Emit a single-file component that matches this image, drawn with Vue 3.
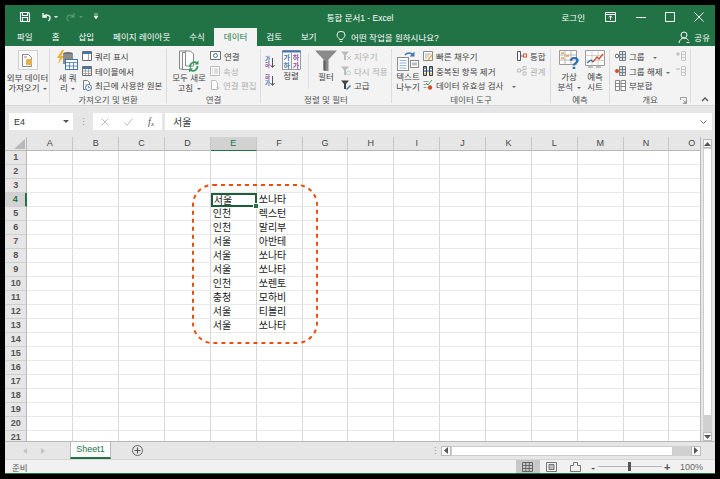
<template>
  <div class="screen">
    <div class="window">
      <header class="titlebar">
        <div class="qat">
          <svg class="qi" width="12" height="12" viewBox="0 0 12 12"><path d="M1.500 1.500h8l1 1v8h-9z M3.500 1.500v3h5v-3 M3.500 10.500v-4h5v4" fill="none" stroke="#fff" stroke-width="1.100"/></svg>
          <svg class="qi undo" width="12" height="12" viewBox="0 0 12 12"><path d="M3 2v4h4 M3.200 5.800C5 3.400 9 3.400 10 6c.5 1.500-.3 3-1.500 4" fill="none" stroke="#fff" stroke-width="1.300"/></svg>
          <i class="drop"></i>
          <svg class="qi redo" width="12" height="12" viewBox="0 0 12 12"><path d="M9 2v4H5 M8.800 5.800C7 3.400 3 3.400 2 6c-.5 1.500.3 3 1.500 4" fill="none" stroke="#5d9c7a" stroke-width="1.200"/></svg>
          <i class="drop dim"></i>
          <svg class="qi more" width="6" height="7" viewBox="0 0 6 7"><path d="M1 1h4M1 3l2 3 2-3z" fill="#fff" stroke="#e8f0eb" stroke-width=".7"/></svg>
        </div>
        <div class="doc">통합 문서1 - Excel</div>
        <div class="winctl">
          <span class="login">로그인</span>
          <svg class="wi" width="11" height="10" viewBox="0 0 11 10"><path d="M.5.500h10v9H.500z" fill="none" stroke="#fff"/><path d="M.5 2.500h10M5.500 8V4M3.800 5.500l1.700-1.700 1.700 1.700" fill="none" stroke="#fff"/></svg>
          <svg class="wi minbtn" width="10" height="10" viewBox="0 0 10 10"><path d="M0 5.500h10" stroke="#fff"/></svg>
          <svg class="wi maxbtn" width="10" height="10" viewBox="0 0 10 10"><path d="M.5.500h9v9h-9z" fill="none" stroke="#fff"/></svg>
          <svg class="wi closebtn" width="10" height="10" viewBox="0 0 10 10"><path d="M.5.500l9 9M9.500.500l-9 9" stroke="#fff"/></svg>
        </div>
      </header>

      <nav class="tabs">
        <span v-for="t in tabs" :key="t" class="tab" :class="{ active: t === '데이터' }">{{ t }}</span>
        <svg class="bulb" width="10" height="12" viewBox="0 0 10 12"><path d="M3.500 8.500C3 6.800 1 6.200 1 4a4 3.700 0 0 1 8 0c0 2.200-2 2.800-2.500 4.500zM3.800 10.500h2.400" fill="none" stroke="#fff" stroke-width=".9"/></svg>
        <span class="tell">어떤 작업을 원하시나요?</span>
        <div class="share">
          <svg width="12" height="12" viewBox="0 0 12 12"><circle cx="6" cy="4" r="3" fill="none" stroke="#fff"/><path d="M1 12c.5-3 2.500-5 5-5s3.500 1 4.500 2.500M8.500 11.500h3" fill="none" stroke="#fff"/></svg>
          <span>공유</span>
        </div>
      </nav>

      <section class="ribbon">
        <div class="group g1">
          <div class="gbody">
            <div class="bigbtn">
              <div class="ext-box">
                <svg width="11" height="13" viewBox="0 0 11 13"><path d="M.5.500h6l3 3v9h-9z" fill="#fff" stroke="#8a8a8a"/><rect x="4" y="5" width="6" height="6" rx="1" fill="#e3b04b"/><path d="M2 3h3" stroke="#8a8a8a"/></svg>
              </div>
              <div class="biglabel">외부 데이터<br />가져오기 <i class="caret"></i></div>
            </div>
          </div>
          <div class="glabel">&nbsp;</div>
        </div>

        <div class="group g2">
          <div class="gbody">
            <div class="bigbtn newq">
              <svg class="bigicon" width="21" height="22" viewBox="0 0 21 22">
                <path d="M5 0L0 8h3l-2 6 6-8H4l3-6z" fill="#eeb028"/>
                <ellipse cx="11" cy="4" rx="5" ry="2" fill="#6d6d6d"/>
                <path d="M6 4v10h10V4" fill="#8c8c8c"/>
                <rect x="8.500" y="9.500" width="12" height="10" fill="#fff" stroke="#3f75b1"/>
                <path d="M8.500 12.500h12M12.500 12.500v7M16.500 12.500v7M8.500 16h12" stroke="#3f75b1" stroke-width=".8"/>
              </svg>
              <div class="biglabel">새 쿼<br />리 <i class="caret"></i></div>
            </div>
            <div class="rows">
              <div class="row">
                <svg class="si" width="10" height="10" viewBox="0 0 10 10"><path d="M.5.500h9v9h-9z" fill="#fff" stroke="#6c6c6c"/><path d="M.5 2h9" stroke="#3f75b1" stroke-width="2"/><path d="M6.500 3v6" stroke="#aaa"/></svg>
                <span>쿼리 표시</span>
              </div>
              <div class="row">
                <svg class="si" width="10" height="10" viewBox="0 0 10 10"><path d="M.5.500h9v9h-9z" fill="#fff" stroke="#6c6c6c"/><path d="M.5 2h9" stroke="#3f75b1" stroke-width="2"/><path d="M.5 5h9M.5 7.500h9M3.500 3v6M6.500 3v6" stroke="#888" stroke-width=".7"/></svg>
                <span>테이블에서</span>
              </div>
              <div class="row">
                <svg class="si" width="10" height="11" viewBox="0 0 10 11"><path d="M1.500.500h4l2 2v3M1.500.500v9h2" fill="#fff" stroke="#7a7a7a"/><circle cx="6.500" cy="7.500" r="3" fill="#fff" stroke="#3f75b1"/><path d="M6.500 6v1.500h1.500" stroke="#3f75b1" fill="none" stroke-width=".8"/></svg>
                <span>최근에 사용한 원본</span>
              </div>
            </div>
          </div>
          <div class="glabel">가져오기 및 변환</div>
        </div>

        <div class="group g3">
          <div class="gbody">
            <div class="bigbtn refresh">
              <svg class="bigicon" width="20" height="22" viewBox="0 0 20 22">
                <path d="M.5 1h7l3 3v15h-10z" fill="#f7f7f7" stroke="#8a8a8a"/>
                <path d="M3.500 2.500h5l3 2.500v14.500h-8z" fill="#fff" stroke="#8a8a8a"/>
                <path d="M6.500 1h5l3 3v12h-8z" fill="#fff" stroke="#8a8a8a"/>
                <path d="M11 17a4.500 4.500 0 0 1 7-4M18.500 16a4.500 4.500 0 0 1-7 4" fill="none" stroke="#35995a" stroke-width="1.800"/>
                <path d="M19.500 10.500v4h-4zM10 22.500v-4h4z" fill="#35995a"/>
              </svg>
              <div class="biglabel">모두 새로<br />고침 <i class="caret"></i></div>
            </div>
            <div class="rows">
              <div class="row">
                <svg class="si" width="11" height="10" viewBox="0 0 11 10"><path d="M.5.500h10v8h-10z" fill="#fff" stroke="#6c6c6c"/><circle cx="5.500" cy="4.500" r="2" fill="none" stroke="#3f75b1"/></svg>
                <span>연결</span>
              </div>
              <div class="row off">
                <svg class="si" width="10" height="10" viewBox="0 0 10 10"><path d="M.5.500h9v9h-9z" fill="#fff" stroke="#bcbcbc"/><path d="M2 3h1M4 3h4M2 5h1M4 5h4M2 7h1M4 7h4" stroke="#bcbcbc"/></svg>
                <span>속성</span>
              </div>
              <div class="row off">
                <svg class="si" width="10" height="10" viewBox="0 0 10 10"><path d="M1.500.500h4l2 2v7h-6z" fill="#fff" stroke="#bcbcbc"/><path d="M6 8l3 1-1-3z" fill="#bcbcbc"/></svg>
                <span>연결 편집</span>
              </div>
            </div>
          </div>
          <div class="glabel">연결</div>
        </div>

        <div class="group g4">
          <div class="gbody">
            <div class="sorts">
              <div class="sort">
                <div class="letters"><span class="blue">가</span><span class="purple">하</span></div>
                <svg width="5" height="10" viewBox="0 0 5 10"><path d="M2.500 0v9M.5 7l2 2.500 2-2.500" fill="none" stroke="#555"/></svg>
              </div>
              <div class="sort">
                <div class="letters"><span class="purple">하</span><span class="blue">가</span></div>
                <svg width="5" height="10" viewBox="0 0 5 10"><path d="M2.500 0v9M.5 7l2 2.500 2-2.500" fill="none" stroke="#555"/></svg>
              </div>
            </div>
            <div class="bigbtn sortbig">
              <svg class="bigicon" width="19" height="20" viewBox="0 0 19 20">
                <path d="M.5.500h18v19H.5z" fill="#fff" stroke="#9a9a9a"/>
                <path d="M.5 1.500h18" stroke="#3f75b1" stroke-width="2"/>
                <path d="M9.500 2v17" stroke="#9a9a9a"/>
                <text x="1.500" y="10" font-size="7" font-weight="700" fill="#3f75b1">가</text>
                <text x="1.500" y="17.500" font-size="7" font-weight="700" fill="#3f75b1">하</text>
                <text x="10.800" y="10" font-size="7" font-weight="700" fill="#8e4aa0">하</text>
                <text x="10.800" y="17.500" font-size="7" font-weight="700" fill="#8e4aa0">가</text>
              </svg>
              <div class="biglabel">정렬</div>
            </div>
            <div class="vsep"></div>
            <div class="bigbtn filter">
              <svg class="bigicon" width="22" height="21" viewBox="0 0 22 21"><path d="M0 .5h22l-8.500 9V21h-5V9.500z" fill="#8a8a8a"/><path d="M9.500 10.500V20" stroke="#5d5d5d" stroke-width="2"/></svg>
              <div class="biglabel">필터</div>
            </div>
            <div class="rows">
              <div class="row off">
                <svg class="si" width="10" height="10" viewBox="0 0 10 10"><path d="M0 .5h8L5 4v5H3V4z" fill="#bcbcbc"/><path d="M6 5l4 4M10 5L6 9" stroke="#c6c6c6"/></svg>
                <span>지우기</span>
              </div>
              <div class="row off">
                <svg class="si" width="10" height="10" viewBox="0 0 10 10"><path d="M0 .5h8L5 4v5H3V4z" fill="#bcbcbc"/><circle cx="7.500" cy="7" r="2" fill="none" stroke="#bcd3c3"/></svg>
                <span>다시 적용</span>
              </div>
              <div class="row">
                <svg class="si" width="10" height="10" viewBox="0 0 10 10"><path d="M0 .5h8L5 4v5H3V4z" fill="#444"/><path d="M5.500 9.500l4-4" stroke="#3f75b1" stroke-width="1.500"/></svg>
                <span>고급</span>
              </div>
            </div>
          </div>
          <div class="glabel">정렬 및 필터</div>
        </div>

        <div class="group g5">
          <div class="gbody">
            <div class="bigbtn split">
              <svg class="bigicon" width="22" height="21" viewBox="0 0 22 21">
                <path d="M8 5a5 5 0 0 1 8 0" fill="none" stroke="#3f75b1" stroke-width="1.400"/>
                <path d="M17.500 1.500v5h-5z" fill="#3f75b1"/>
                <rect x=".5" y="7.500" width="11" height="13" fill="#fff" stroke="#8a8a8a"/>
                <path d="M2.500 10.500h7M2.500 13h7M2.500 15.500h7M2.500 18h7" stroke="#8fb2d6"/>
                <rect x="13.500" y="10.500" width="8" height="7" fill="#fff" stroke="#8a8a8a"/>
                <rect x="15" y="12.500" width="5" height="3" fill="#bcbcbc"/>
              </svg>
              <div class="biglabel">텍스트<br />나누기</div>
            </div>
            <div class="rows wide">
              <div class="row">
                <svg class="si" width="10" height="10" viewBox="0 0 10 10"><path d="M.5.500h9v9h-9z" fill="#fff" stroke="#8a8a8a"/><path d="M2 3h6M2 5h4M2 7h2" stroke="#aaa"/><path d="M5 9l4-5" stroke="#e3b04b" stroke-width="1.500"/></svg>
                <span>빠른 채우기</span>
              </div>
              <div class="row">
                <svg class="si" width="10" height="10" viewBox="0 0 10 10"><path d="M.5.5h3v9h-3zM6.500.500h3v9h-3z" fill="#fff" stroke="#3b3b3b"/><path d="M1 2h2M1 5h2M7 2h2M7 5h2" stroke="#3f75b1" stroke-width="1.500"/><path d="M1 8h2M7 8h2" stroke="#e3b04b" stroke-width="1.500"/><path d="M4 5h2" stroke="#3f75b1"/></svg>
                <span>중복된 항목 제거</span>
              </div>
              <div class="row">
                <svg class="si" width="10" height="10" viewBox="0 0 10 10"><path d="M.5 1.500h5M.5 4.500h3M.5 7.500h3" stroke="#9a9a9a"/><path d="M3 3l2 2 4-5" fill="none" stroke="#46a05f"/><circle cx="7" cy="7.500" r="2.200" fill="#d4502a"/></svg>
                <span>데이터 유효성 검사 <i class="caret wide-caret"></i></span>
              </div>
            </div>
            <div class="rows narrow">
              <div class="row">
                <svg class="si" width="10" height="10" viewBox="0 0 10 10"><path d="M.5.500h3v9h-3z" fill="#fff" stroke="#555"/><path d="M4 5h2" stroke="#3f75b1"/><rect x="6.500" y="3" width="3" height="3" fill="#fff" stroke="#d4502a"/></svg>
                <span>통합</span>
              </div>
              <div class="row off">
                <svg class="si" width="10" height="10" viewBox="0 0 10 10"><path d="M.5 3h3v3h-3zM6 .5h3v3H6zM6 6h3v3H6zM3.500 4.500H6" fill="none" stroke="#bcbcbc"/></svg>
                <span>관계</span>
              </div>
            </div>
          </div>
          <div class="glabel">데이터 도구</div>
        </div>

        <div class="group g6">
          <div class="gbody">
            <div class="bigbtn whatif">
              <svg class="bigicon" width="20" height="21" viewBox="0 0 20 21">
                <path d="M.5.500h17v14h-17z" fill="#fff" stroke="#9a9a9a"/>
                <path d="M6 .5v14M12 .5v14M.5 5h17M.5 10h17" stroke="#b5b5b5"/>
                <path d="M2 3h3M2 8h3M7 6h3" stroke="#e3a03b" stroke-width="1.500"/>
                <text x="10" y="19" font-size="17" font-weight="700" fill="#2a6db0">?</text>
              </svg>
              <div class="biglabel">가상<br />분석 <i class="caret"></i></div>
            </div>
            <div class="bigbtn forecast">
              <svg class="bigicon" width="20" height="21" viewBox="0 0 20 21">
                <path d="M.5.500h19v15h-19z" fill="#fff" stroke="#9a9a9a"/>
                <path d="M7 .5v15M13 .5v15M.5 5.500h19M.5 10.500h19" stroke="#cfcfcf"/>
                <path d="M2 13l4-3 2 2" fill="none" stroke="#2a6db0" stroke-width="1.300"/>
                <path d="M8 12l4-5 2 2 4-5" fill="none" stroke="#d4502a" stroke-width="1.300"/>
                <path d="M3 17h5M11 17h5" stroke="#8a8a8a"/>
              </svg>
              <div class="biglabel">예측<br />시트</div>
            </div>
          </div>
          <div class="glabel">예측</div>
        </div>

        <div class="group g7">
          <div class="gbody">
            <div class="rows">
              <div class="row">
                <svg class="si" width="11" height="10" viewBox="0 0 11 10"><circle cx="2" cy="5" r="1.800" fill="#fff" stroke="#666"/><path d="M4.500.500h6v9h-6zM4.500 3.500h6M4.500 6.500h6M7.500.5v9" fill="#cfe0ef" stroke="#6c6c6c" stroke-width=".8"/></svg>
                <span>그룹 <i class="caret wide-caret"></i></span>
              </div>
              <div class="row">
                <svg class="si" width="11" height="10" viewBox="0 0 11 10"><circle cx="2" cy="5" r="2" fill="#d4502a"/><path d="M4.500.500h6v9h-6zM4.500 3.500h6M4.500 6.500h6M7.500.5v9" fill="#cfe0ef" stroke="#6c6c6c" stroke-width=".8"/></svg>
                <span>그룹 해제 <i class="caret"></i></span>
              </div>
              <div class="row">
                <svg class="si" width="11" height="11" viewBox="0 0 11 11"><path d="M.5.500h4v10h-4zM6 .5h4.500v10H6zM6 3.500h4.500M6 6.500h4.500M.5 3.500h4M.5 6.500h4" fill="#fff" stroke="#6c6c6c" stroke-width=".8"/></svg>
                <span>부분합</span>
              </div>
            </div>
            <div class="outline">
              <svg width="10" height="10" viewBox="0 0 10 10"><path d="M0 3h4M2 1v4" stroke="#b5b5b5"/><path d="M5.500.5h4v9h-4zM5.500 3.500h4M5.500 6.500h4" fill="none" stroke="#c6c6c6"/></svg>
              <svg width="10" height="10" viewBox="0 0 10 10"><path d="M0 3h4" stroke="#b5b5b5"/><path d="M5.500.5h4v9h-4zM5.500 3.500h4M5.500 6.500h4" fill="none" stroke="#c6c6c6"/></svg>
            </div>
          </div>
          <div class="glabel">개요</div>
          <svg class="launcher" width="7" height="7" viewBox="0 0 7 7"><path d="M.5 3V.5h6v6H3M3 3l3 3M6 3.500V6H3.500" fill="none" stroke="#8a8a8a" stroke-width=".8"/></svg>
        </div>
        <svg class="collapse" width="8" height="5" viewBox="0 0 8 5"><path d="M1 4l3-3 3 3" fill="none" stroke="#555" stroke-width="1.300"/></svg>
      </section>

      <section class="formula">
        <div class="namebox">
          <span>E4</span>
          <i class="caret dark"></i>
        </div>
        <div class="grip">⋮</div>
        <div class="fx-btns">
          <svg width="8" height="8" viewBox="0 0 8 8"><path d="M.5.500l7 7M7.500.500l-7 7" stroke="#bdbdbd"/></svg>
          <svg width="9" height="8" viewBox="0 0 9 8"><path d="M.5 4.500l2.500 3 5.500-7" fill="none" stroke="#bdbdbd"/></svg>
          <span class="fx">f<sub>x</sub></span>
        </div>
        <div class="finput">
          <span>서울</span>
          <svg width="7" height="4" viewBox="0 0 7 4"><path d="M.5.500l3 3 3-3" fill="none" stroke="#666"/></svg>
        </div>
      </section>

      <section class="sheet">
        <div class="gridwrap">
          <div class="colheads">
            <div class="corner"><svg width="11" height="10" viewBox="0 0 11 10"><path d="M11 0v10H0z" fill="#b9b9b9"/></svg></div>
            <div v-for="c in cols" :key="c" class="colhead" :class="{ on: c === 'E' }">{{ c }}</div>
          </div>
          <div class="rowlist">
            <div v-for="r in rows" :key="r.n" class="gridrow">
              <div class="rowhead" :class="{ on: r.n === 4 }">{{ r.n }}</div>
              <div v-for="c in cols" :key="c" class="cell" :class="{ sel: c === 'E' && r.n === 4 }">
                {{ cellText(r, c) }}
                <i v-if="c === 'E' && r.n === 4" class="handle"></i>
              </div>
            </div>
          </div>
          <svg class="note" width="126" height="160" viewBox="0 0 126 160">
            <rect x="1" y="1" width="124" height="158" rx="20" fill="none" stroke="#e8500f" stroke-width="2" stroke-dasharray="4 4" />
          </svg>
        </div>
        <div class="vscroll">
          <div class="sbtn"><svg width="7" height="4" viewBox="0 0 7 4"><path d="M0 4l3.500-4L7 4z" fill="#555"/></svg></div>
          <div class="vtrack"><div class="vthumb"></div></div>
          <div class="sbtn"><svg width="7" height="4" viewBox="0 0 7 4"><path d="M0 0l3.500 4L7 0z" fill="#555"/></svg></div>
        </div>
      </section>

      <section class="sheettabs">
        <div class="navs">
          <svg width="4" height="6" viewBox="0 0 4 6"><path d="M4 0v6L0 3z" fill="#c2c2c2"/></svg>
          <svg width="4" height="6" viewBox="0 0 4 6"><path d="M0 0v6l4-3z" fill="#c2c2c2"/></svg>
        </div>
        <div class="stab">Sheet1</div>
        <svg class="addsheet" width="11" height="11" viewBox="0 0 11 11"><circle cx="5.500" cy="5.500" r="5" fill="none" stroke="#666"/><path d="M2.500 5.500h6M5.500 2.500v6" stroke="#555" stroke-width="1.100"/></svg>
        <div class="grip tabgrip">⋮</div>
        <div class="hscroll">
          <div class="sbtn"><svg width="4" height="7" viewBox="0 0 4 7"><path d="M4 0v7L0 3.500z" fill="#555"/></svg></div>
          <div class="hthumb"></div>
          <div class="htrack"></div>
          <div class="sbtn"><svg width="4" height="7" viewBox="0 0 4 7"><path d="M0 0v7l4-3.500z" fill="#555"/></svg></div>
        </div>
      </section>

      <footer class="status">
        <span class="ready">준비</span>
        <div class="views">
          <div class="view on"><svg width="11" height="10" viewBox="0 0 11 10"><path d="M.5.500h10v9H.5zM.5 3.500h10M.5 6.500h10M3.800.5v9M7.200.5v9" fill="none" stroke="#666"/></svg></div>
          <div class="view"><svg width="11" height="10" viewBox="0 0 11 10"><path d="M.5.500h10v9H.5z" fill="none" stroke="#777"/><path d="M3 2.500h5v5H3z" fill="#bbb" stroke="#777"/></svg></div>
          <div class="view"><svg width="11" height="10" viewBox="0 0 11 10"><path d="M.5 3.500h3v-3h4v3h3v6H.5z" fill="none" stroke="#777"/></svg></div>
        </div>
        <div class="zoom">
          <span class="pm">-</span>
          <div class="slider"><i></i></div>
          <span class="pm">+</span>
        </div>
        <span class="pct">100%</span>
      </footer>
    </div>
  </div>
</template>

<script setup>
const tabs = ["파일", "홈", "삽입", "페이지 레이아웃", "수식", "데이터", "검토", "보기"];
const cols = "ABCDEFGHIJKLMNO".split("");

const data = {
  4: ["서울", "쏘나타"],
  5: ["인천", "렉스턴"],
  6: ["인천", "말리부"],
  7: ["서울", "아반테"],
  8: ["서울", "쏘나타"],
  9: ["서울", "쏘나타"],
  10: ["인천", "쏘렌토"],
  11: ["충청", "모하비"],
  12: ["서울", "티볼리"],
  13: ["서울", "쏘나타"],
};

const rows = Array.from({ length: 21 }, (_, i) => ({ n: i + 1, vals: data[i + 1] || [] }));

const cellText = (r, c) => {
  if (c === "E") return r.vals[0] || "";
  if (c === "F") return r.vals[1] || "";
  return "";
};
</script>

<style>
html,
body {
  margin: 0;
  background: #000;
}
</style>

<style scoped>
.screen {
  width: 720px;
  height: 479px;
  box-sizing: border-box;
  padding: 5px;
  background: #000;
  overflow: hidden;
  font-family: "Liberation Sans", "Noto Sans CJK KR", sans-serif;
  font-size: 8.5px;
  color: #444;
}

.window {
  width: 710px;
  height: 469px;
  display: flex;
  flex-direction: column;
  background: #e6e6e6;
  border-bottom: 1px solid #217346;
  box-sizing: border-box;
  overflow: hidden;
}

i {
  font-style: normal;
}

/* title */
.titlebar {
  height: 23px;
  flex: none;
  display: grid;
  grid-template-columns: 1fr auto 1fr;
  align-items: center;
  background: #217346;
  color: #fff;
}

.qat {
  display: flex;
  align-items: center;
  padding-left: 14px;
}

.qi.undo {
  margin-left: 9px;
}

.qi.redo {
  margin-left: 7px;
}

.qi.more {
  margin-left: 10px;
}

.drop {
  width: 0;
  height: 0;
  margin-left: 2px;
  border: 2px solid transparent;
  border-top-color: #fff;
  border-bottom: 0;
}

.drop.dim {
  border-top-color: #5d9c7a;
}

.doc {
  white-space: nowrap;
}

.winctl {
  display: flex;
  align-items: center;
  justify-content: flex-end;
}

.login {
  margin-right: 20px;
}

.minbtn {
  margin-left: 20px;
}

.maxbtn {
  margin-left: 19px;
}

.closebtn {
  margin-left: 19px;
  margin-right: 11px;
}

/* tabs */
.tabs {
  height: 18px;
  flex: none;
  display: flex;
  align-items: center;
  padding-left: 2.5px;
  background: #217346;
  color: #fff;
}

.tab {
  height: 18px;
  line-height: 18px;
  padding: 0 9.5px;
  white-space: nowrap;
}

.tab.active {
  background: #f3f3f3;
  color: #217346;
}

.bulb {
  margin-left: 10px;
}

.tell {
  margin-left: 5px;
}

.share {
  margin-left: auto;
  margin-right: 5px;
  display: flex;
  align-items: center;
  gap: 4px;
}

/* ribbon */
.ribbon {
  position: relative;
  height: 60px;
  flex: none;
  display: flex;
  padding-top: 3px;
  box-sizing: border-box;
  background: #f3f3f3;
  border-bottom: 1px solid #d6d6d6;
}

.group {
  position: relative;
  height: 54px;
  box-sizing: border-box;
  display: flex;
  flex-direction: column;
  border-right: 1px solid #dcdcdc;
}

.g1 { width: 45px; }
.g2 { width: 117px; }
.g3 { width: 94px; }
.g4 { width: 131px; }
.g5 { width: 159px; }
.g6 { width: 59px; }
.g7 { width: 81px; }

.gbody {
  flex: 1;
  display: flex;
  min-height: 0;
}

.glabel {
  height: 12px;
  margin-bottom: -3px;
  line-height: 12px;
  text-align: center;
  color: #555;
}

.bigbtn {
  flex: none;
  display: flex;
  flex-direction: column;
  align-items: center;
}

.biglabel {
  margin-top: 1px;
  line-height: 10px;
  text-align: center;
  white-space: nowrap;
}

.bigicon {
  margin-top: 1px;
}

.g1 .bigbtn {
  width: 45px;
}

.ext-box {
  width: 20px;
  height: 20px;
  box-sizing: border-box;
  margin-top: 1px;
  display: flex;
  align-items: center;
  justify-content: center;
  border: 1px solid #d0d0d0;
  background: #f8f8f8;
}

.g1 .biglabel {
  margin-top: 3px;
}

.newq {
  width: 25px;
  margin-left: 5px;
}

.g2 .rows {
  margin-left: 2px;
}

.refresh {
  width: 36px;
  margin-left: 4px;
}

.sorts {
  width: 14px;
  margin-left: 4px;
  display: flex;
  flex-direction: column;
  gap: 7px;
  padding-top: 8px;
  flex: none;
}

.sort {
  height: 11px;
  display: flex;
  align-items: center;
  gap: 0;
}

.letters {
  display: flex;
  flex-direction: column;
  font-size: 5.5px;
  line-height: 5.5px;
  font-weight: 700;
}

.blue {
  color: #3f75b1;
}

.purple {
  color: #8e4aa0;
}

.sortbig {
  width: 24px;
}

.vsep {
  width: 1px;
  height: 36px;
  flex: none;
  margin: 4px 5px 0 5px;
  background: #e0e0e0;
}

.filter {
  width: 24px;
}

.split {
  width: 24px;
  margin-left: 4px;
}

.whatif {
  width: 24px;
  margin-left: 6px;
}

.forecast {
  width: 24px;
  margin-left: 2px;
}

.rows {
  display: flex;
  flex-direction: column;
  margin-left: 3px;
}

.row {
  height: 14.5px;
  display: flex;
  align-items: center;
  gap: 3px;
  white-space: nowrap;
}

.row.off {
  color: #b1b1b1;
}

.si {
  flex: none;
}

.rows.wide {
  width: 94px;
}

.rows.narrow {
  margin-left: 0;
}

.outline {
  margin-left: 6px;
  padding-top: 2px;
  display: flex;
  flex-direction: column;
  gap: 5px;
}

.g7 .rows {
  margin-left: 5px;
}

.launcher {
  position: absolute;
  right: 3px;
  bottom: -1px;
}

.collapse {
  position: absolute;
  right: 6px;
  bottom: 3px;
}

.caret {
  display: inline-block;
  width: 0;
  height: 0;
  margin-left: 1px;
  vertical-align: middle;
  border: 2px solid transparent;
  border-top-color: #666;
  border-bottom: 0;
}

.caret.wide-caret {
  margin-left: 6px;
}

/* formula bar */
.formula {
  height: 31px;
  flex: none;
  display: flex;
  align-items: center;
  padding: 0 3px 0 4px;
  box-sizing: border-box;
  background: #e6e6e6;
}

.namebox {
  width: 64px;
  height: 17px;
  flex: none;
  box-sizing: border-box;
  display: flex;
  align-items: center;
  justify-content: space-between;
  padding: 0 4px 0 5px;
  background: #fff;
  font-size: 9px;
  color: #333;
}

.caret.dark {
  border-width: 3px;
  border-bottom: 0;
  border-top-color: #555;
}

.grip {
  width: 20px;
  flex: none;
  text-align: center;
  color: #999;
  font-size: 9px;
}

.fx-btns {
  width: 69px;
  height: 17px;
  flex: none;
  box-sizing: border-box;
  display: flex;
  align-items: center;
  justify-content: space-between;
  padding: 0 8px;
  background: #fff;
}

.fx {
  font-family: "Liberation Serif", serif;
  font-style: italic;
  font-size: 10px;
  color: #555;
}

.fx sub {
  font-size: 7px;
  vertical-align: -1px;
  line-height: 0;
}

.finput {
  flex: 1;
  height: 17px;
  margin-left: 3px;
  display: flex;
  align-items: center;
  justify-content: space-between;
  padding: 0 5px 0 8px;
  background: #fff;
  font-size: 10px;
  color: #333;
}

/* grid */
.sheet {
  height: 304px;
  flex: none;
  display: flex;
  background: #e6e6e6;
}

.gridwrap {
  position: relative;
  width: 696px;
  flex: none;
  overflow: hidden;
  background: #fff;
  box-sizing: border-box;
  border-right: 1px solid #b9b9b9;
}

.colheads {
  height: 14px;
  display: flex;
}

.corner {
  width: 22.4px;
  flex: none;
  box-sizing: border-box;
  display: flex;
  align-items: flex-end;
  justify-content: flex-end;
  padding: 0 1px 1px 0;
  background: #e6e6e6;
  border-right: 1px solid #b9b9b9;
  border-bottom: 1px solid #b9b9b9;
}

.colhead {
  width: 45.87px;
  flex: none;
  box-sizing: border-box;
  text-align: center;
  line-height: 13px;
  font-size: 9px;
  color: #444;
  background: #e6e6e6;
  border-right: 1px solid #c6c6c6;
  border-bottom: 1px solid #b9b9b9;
}

.colhead.on {
  background: #d2d2d2;
  color: #217346;
  border-bottom: 1px solid #217346;
}

.gridrow {
  height: 14px;
  display: flex;
}

.rowhead {
  width: 22.4px;
  flex: none;
  box-sizing: border-box;
  text-align: center;
  line-height: 13px;
  font-size: 9px;
  font-weight: 700;
  color: #555;
  background: #e6e6e6;
  border-right: 1px solid #b9b9b9;
  border-bottom: 1px solid #cfcfcf;
}

.rowhead.on {
  background: #d2d2d2;
  color: #217346;
  border-right: 2px solid #217346;
}

.cell {
  position: relative;
  width: 45.87px;
  flex: none;
  box-sizing: border-box;
  padding-left: 2px;
  line-height: 14px;
  font-size: 10px;
  color: #1a1a1a;
  white-space: nowrap;
  border-right: 1px solid #d8d8d8;
  border-bottom: 1px solid #e8e8e8;
}

.cell.sel {
  border: 2px solid #1f5d3a;
  padding-left: 1px;
  line-height: 11px;
}

.handle {
  position: absolute;
  right: -4px;
  bottom: -4px;
  width: 4px;
  height: 4px;
  background: #217346;
  border: 1px solid #fff;
  z-index: 1;
}

.note {
  position: absolute;
  left: 187px;
  top: 47px;
  pointer-events: none;
}

.vscroll {
  flex: 1;
  display: flex;
  flex-direction: column;
  padding: 2px 3px 0 2px;
}

.sbtn {
  height: 9px;
  display: flex;
  align-items: center;
  justify-content: center;
  background: #f8f8f8;
  border: 1px solid #bdbdbd;
  box-sizing: border-box;
  flex: none;
}

.vtrack {
  flex: 1;
  background: #d0d0d0;
}

.vthumb {
  height: 268px;
  box-sizing: border-box;
  background: #fff;
  border: 1px solid #cdcdcd;
}

/* sheet tabs */
.sheettabs {
  height: 18px;
  flex: none;
  display: flex;
  align-items: center;
  background: #e6e6e6;
  border-top: 1px solid #b9b9b9;
  box-sizing: border-box;
}

.navs {
  width: 65px;
  flex: none;
  display: flex;
  gap: 14px;
  padding-left: 18px;
  box-sizing: border-box;
}

.stab {
  width: 41px;
  height: 17px;
  flex: none;
  box-sizing: border-box;
  margin-top: -1px;
  text-align: center;
  line-height: 15px;
  font-size: 9px;
  color: #217346;
  background: #fff;
  border-left: 1px solid #b9b9b9;
  border-right: 1px solid #b9b9b9;
  border-bottom: 2px solid #217346;
}

.addsheet {
  margin-left: 21px;
}

.tabgrip {
  margin-left: auto;
  width: 10px;
}

.hscroll {
  width: 260px;
  height: 10px;
  margin-left: 1px;
  margin-right: 14px;
  flex: none;
  display: flex;
  align-items: center;
}

.hscroll .sbtn {
  width: 10px;
  height: 10px;
}

.hthumb {
  width: 222px;
  height: 10px;
  background: #fff;
  border: 1px solid #cdcdcd;
  box-sizing: border-box;
}

.htrack {
  flex: 1;
  height: 10px;
  background: #d0d0d0;
}

/* status */
.status {
  flex: 1;
  display: flex;
  align-items: center;
  background: #f1f1f1;
  border-top: 1px solid #d6d6d6;
  box-sizing: border-box;
  color: #555;
}

.ready {
  margin-left: 7px;
}

.views {
  margin-left: auto;
  display: flex;
  height: 100%;
}

.view {
  width: 24px;
  display: flex;
  align-items: center;
  justify-content: center;
}

.view.on {
  background: #c8c8c8;
}

.zoom {
  margin-left: 2px;
  display: flex;
  align-items: center;
  gap: 2px;
}

.pm {
  width: 6px;
  text-align: center;
  font-size: 11px;
  font-weight: 700;
  line-height: 10px;
}

.slider {
  position: relative;
  width: 64px;
  height: 1px;
  background: #b5b5b5;
}

.slider i {
  position: absolute;
  left: 30px;
  top: -4px;
  width: 3px;
  height: 9px;
  background: #555;
}

.pct {
  margin-left: 10px;
  margin-right: 12px;
  font-size: 9px;
  color: #666;
}
</style>
